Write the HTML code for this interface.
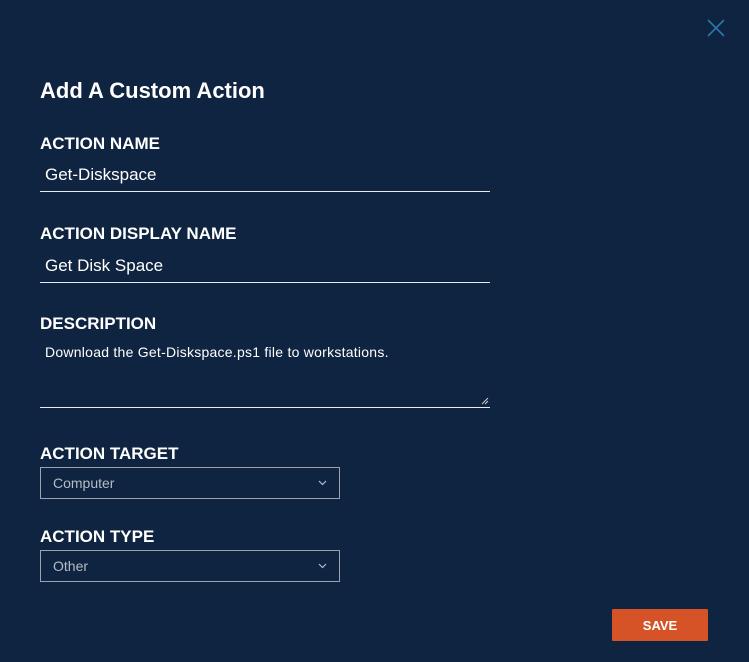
<!DOCTYPE html>
<html><head><meta charset="utf-8"><style>
html,body{margin:0;padding:0;}
body{width:749px;height:662px;background:#0f2440;position:relative;overflow:hidden;font-family:"Liberation Sans",sans-serif;color:#fff;}
.a{position:absolute;white-space:nowrap;}
.t{font-size:22px;font-weight:bold;left:40px;top:78px;}
.l{font-size:17px;font-weight:bold;left:40px;}
.v{font-size:17px;left:45px;}
.line{position:absolute;left:40px;width:450px;height:1px;background:#e8ecf0;}
.sel{position:absolute;left:40px;width:298px;height:30px;border:1px solid #9aa3ae;}
.sel span{position:absolute;left:12px;top:7px;font-size:14px;color:#b4bcc6;}
.sel svg{position:absolute;right:12px;top:12px;}
</style></head><body>
<svg class="a" style="left:707px;top:19px" width="18" height="18"><path d="M1 1L17 17M17 1L1 17" stroke="#2d75a8" stroke-width="1.6"/></svg>
<div class="a t">Add A Custom Action</div>
<div class="a l" style="top:134px">ACTION NAME</div>
<div class="a v" style="top:165px">Get-Diskspace</div>
<div class="line" style="top:191px"></div>
<div class="a l" style="top:224px">ACTION DISPLAY NAME</div>
<div class="a v" style="top:256px">Get Disk Space</div>
<div class="line" style="top:282px"></div>
<div class="a l" style="top:314px">DESCRIPTION</div>
<div class="a" style="left:45px;top:344px;font-size:14px;letter-spacing:0.25px">Download the Get-Diskspace.ps1 file to workstations.</div>
<svg class="a" style="left:481px;top:397px" width="8" height="8"><path d="M1 7L7 1M4 7L7 4" stroke="#ccc" stroke-width="1"/></svg>
<div class="line" style="top:407px"></div>
<div class="a l" style="top:444px">ACTION TARGET</div>
<div class="sel" style="top:467px"><span>Computer</span><svg width="9" height="6"><path d="M1 1L4.5 4.5L8 1" stroke="#b4bcc6" fill="none" stroke-width="1.2"/></svg></div>
<div class="a l" style="top:527px">ACTION TYPE</div>
<div class="sel" style="top:550px"><span>Other</span><svg width="9" height="6"><path d="M1 1L4.5 4.5L8 1" stroke="#b4bcc6" fill="none" stroke-width="1.2"/></svg></div>
<div class="a" style="left:612px;top:609px;width:96px;height:32px;background:#d65327;border-radius:1px;font-size:13px;font-weight:bold;text-align:center;line-height:33px">SAVE</div>
</body></html>
